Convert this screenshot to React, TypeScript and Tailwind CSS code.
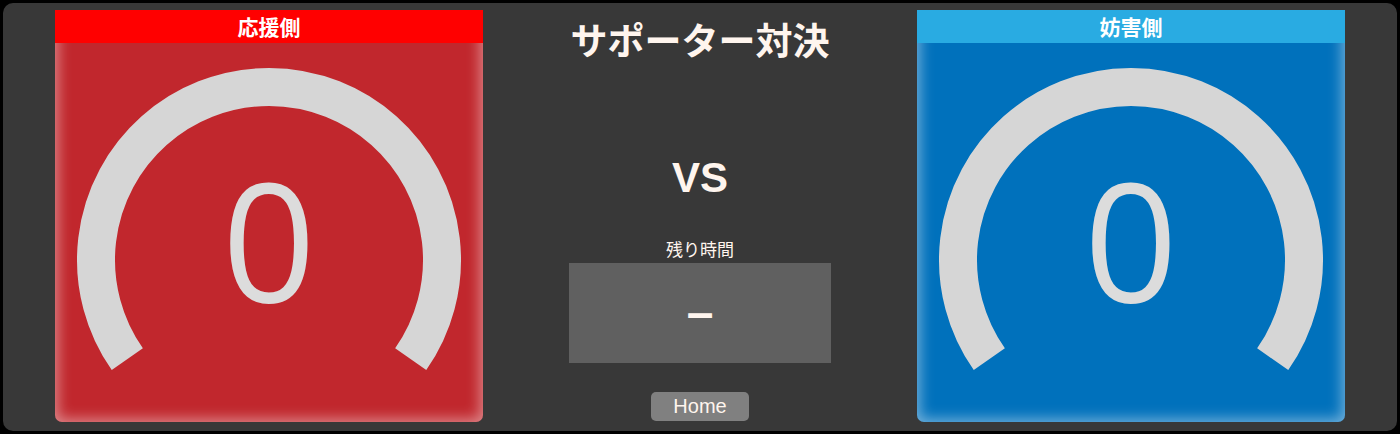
import React from 'react'

interface Side {
  label: string
  head: string
  body: string
  score: number
}

const sides: Side[] = [
  { label: '応援側', head: 'bg-[#ff0000]', body: 'bg-[#c1272d]', score: 0 },
  { label: '妨害側', head: 'bg-[#29abe2]', body: 'bg-[#0071bc]', score: 0 },
]

const jp = "font-['Noto_Sans_CJK_JP',sans-serif]"

// gauge arc: -125deg .. 125deg from top, centre (214, 250), r 173
const Gauge = () => (
  <svg width="428" height="412" viewBox="0 0 428 412" className="absolute inset-0">
    <path
      d="M 72.3 349.2 A 173 173 0 1 1 355.7 349.2"
      fill="none"
      stroke="#d6d6d6"
      strokeWidth="38"
    />
  </svg>
)

const ScoreCard = ({ side }: { side: Side }) => (
  <div
    className={`relative h-[412px] w-[428px] overflow-hidden rounded-b-[7px] ${side.body} shadow-[inset_0_0_14px_3px_rgba(255,255,255,0.45)]`}
  >
    <div
      className={`relative z-10 flex h-[33px] items-center justify-center ${side.head} ${jp} text-[21px] font-bold text-white`}
    >
      {side.label}
    </div>
    <Gauge />
    <div className="absolute left-0 right-0 top-[139px] flex justify-center font-['Open_Sans',sans-serif] text-[164px] leading-[180px] text-[#dcdcdc]">
      {side.score}
    </div>
  </div>
)

export default function App() {
  return (
    <div className="h-[434px] w-[1400px] bg-black p-[3px]">
      <div className="grid h-full grid-cols-[428px_1fr_428px] rounded-[10px] bg-[#383838] px-[52px] pt-[7px]">
        <ScoreCard side={sides[0]} />

        {/* centre column */}
        <div className="flex flex-col items-center text-[#fff5ee]">
          <h1 className={`mt-[7px] ${jp} text-[37px] font-bold leading-[44px]`}>
            サポーター対決
          </h1>
          <div className="mt-[93px] font-['Liberation_Sans',sans-serif] text-[42px] font-bold leading-[48px]">
            VS
          </div>
          <div className={`mt-[35px] ${jp} text-[17px] leading-[24px]`}>残り時間</div>
          <div className="mt-[2px] flex h-[100px] w-[262px] items-center justify-center bg-[#606060] font-['Liberation_Sans',sans-serif] text-[48px] font-bold">
            –
          </div>
          <button className="mt-[29px] h-[29px] w-[98px] rounded-[5px] bg-[#808080] font-['Liberation_Sans',sans-serif] text-[20px] leading-[29px] text-[#fff5ee]">
            Home
          </button>
        </div>

        <ScoreCard side={sides[1]} />
      </div>
    </div>
  )
}
